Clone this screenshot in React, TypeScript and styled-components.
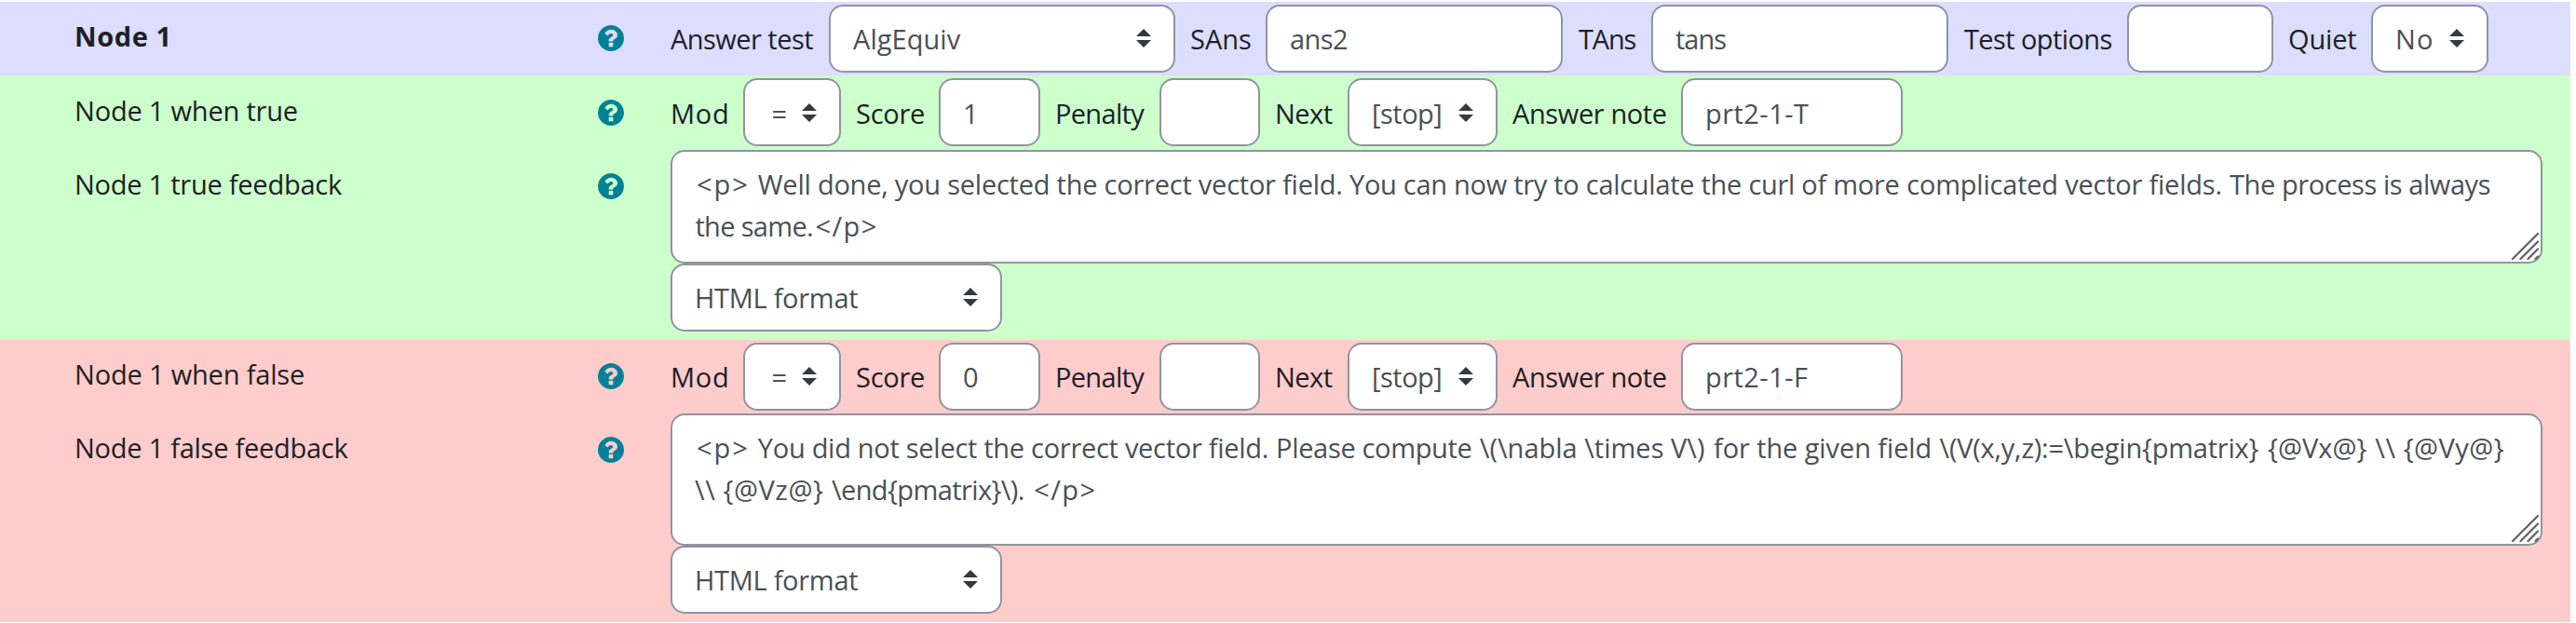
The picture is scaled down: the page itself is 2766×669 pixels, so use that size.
import React from "react";
import styled, { createGlobalStyle } from "styled-components";

const GlobalStyle = createGlobalStyle`
  *, *::before, *::after { box-sizing: border-box; }
  body {
    margin: 0;
    background: #fff;
    color: #1d2125;
    font-family: "Open Sans", "Noto Sans", sans-serif;
    font-size: 29px;
    line-height: 45px;
  }
`;

const Page = styled.main`
  width: 2760px;
  padding-top: 2px;
`;

const Section = styled.section<{ $bg: string }>`
  display: flow-root;
  background: ${(p) => p.$bg};
`;

const Row = styled.div<{ $height?: number }>`
  display: grid;
  grid-template-columns: 720px 1fr;
  height: ${(p) => (p.$height ? `${p.$height}px` : "auto")};
`;

const LabelCell = styled.div<{ $top?: number }>`
  display: flex;
  align-items: flex-start;
  justify-content: space-between;
  padding: ${(p) => p.$top ?? 14}px 50px 0 80px;
`;

const Text = styled.span<{ $track?: number; $bold?: boolean }>`
  white-space: pre;
  font-weight: ${(p) => (p.$bold ? 700 : 400)};
  letter-spacing: ${(p) => p.$track ?? 0}px;
`;

const HelpSvg = styled.svg`
  flex: none;
  width: 28px;
  height: 28px;
  margin-top: 10.7px;
  fill: #008196;
`;

const Controls = styled.div<{ $shift?: number }>`
  --shift: ${(p) => p.$shift ?? 0}px;
  display: flex;
  align-items: flex-start;
  padding-top: 3px;
`;

const Caption = styled.label<{ $width: number; $pad?: number; $track?: number }>`
  flex: none;
  width: ${(p) => p.$width}px;
  padding: calc(14px + var(--shift, 0px)) 0 0 ${(p) => p.$pad ?? 16}px;
  white-space: pre;
  letter-spacing: ${(p) => p.$track ?? 0}px;
`;

const Field = styled.div<{ $width: number }>`
  display: flex;
  flex: none;
  align-items: flex-start;
  justify-content: space-between;
  width: ${(p) => p.$width}px;
  height: 73px;
  padding: calc(12px + var(--shift, 0px)) 24px 0 24px;
  border: 2px solid #8f959e;
  border-radius: 15px;
  background: #fff;
  color: #495057;
`;

const ArrowsSvg = styled.svg`
  flex: none;
  width: 16px;
  height: 20px;
  margin-top: 12px;
  fill: #343a40;
`;

const Editor = styled.div`
  padding-bottom: 9px;
`;

const TextArea = styled.div<{ $height: number }>`
  position: relative;
  width: 2010px;
  height: ${(p) => p.$height}px;
  padding: 12px 22px;
  border: 2px solid #8f959e;
  border-radius: 15px;
  background: #fff;
  color: #495057;
`;

const Line = styled.div<{ $indent: number }>`
  display: flex;
  padding-left: ${(p) => p.$indent}px;
`;

const Phrase = styled.span<{ $width?: number; $track?: number }>`
  flex: none;
  width: ${(p) => (p.$width ? `${p.$width}px` : "auto")};
  white-space: pre;
  letter-spacing: ${(p) => p.$track ?? 0}px;
`;

const GripSvg = styled.svg`
  position: absolute;
  right: 0;
  bottom: 0;
  width: 32px;
  height: 32px;
  fill: none;
  stroke: #666;
  stroke-width: 2.4;
  stroke-linecap: round;
`;

function HelpIcon() {
  return (
    <HelpSvg viewBox="128 128 1536 1536" aria-label="Help">
      <path d="M1024 1376v-192q0-14-9-23t-23-9h-192q-14 0-23 9t-9 23v192q0 14 9 23t23 9h192q14 0 23-9t9-23zm256-672q0-88-55.5-163t-138.5-116-170-41q-243 0-371 213-15 24 8 42l132 100q7 6 19 6 16 0 25-12 53-68 86-92 34-24 86-24 48 0 85.5 26t37.5 59q0 38-20 61t-68 45q-63 28-115.5 86.5t-52.5 125.5v36q0 14 9 23t23 9h192q14 0 23-9t9-23q0-19 21.5-49.5t54.5-49.5q32-18 49-28.5t46-35 44.5-48 28-60.5 12.5-81zm384 192q0 209-103 385.5t-279.5 279.5-385.5 103-385.5-103-279.5-279.5-103-385.5 103-385.5 279.5-279.5 385.5-103 385.5 103 279.5 279.5 103 385.5z" />
    </HelpSvg>
  );
}

function Label(props: { text: string; track: number; bold?: boolean; top?: number }) {
  return (
    <LabelCell $top={props.top}>
      <Text $track={props.track} $bold={props.bold}>{props.text}</Text>
      <HelpIcon />
    </LabelCell>
  );
}

function Input({ width, value = "", track }: { width: number; value?: string; track?: number }) {
  return (
    <Field $width={width}>
      <Text $track={track}>{value}</Text>
    </Field>
  );
}

function Select({ width, value, track }: { width: number; value: string; track?: number }) {
  return (
    <Field $width={width}>
      <Text $track={track}>{value}</Text>
      <ArrowsSvg viewBox="0 0 4 5" preserveAspectRatio="none">
        <path d="M2 0L0 2h4zm0 5L0 3h4z" />
      </ArrowsSvg>
    </Field>
  );
}

function Grip() {
  return (
    <GripSvg viewBox="0 0 32 32">
      <path d="M2 29L29 2M10.5 29L29 10.5M18.5 29L29 18.5M26.5 29L29 26.5" />
    </GripSvg>
  );
}

function BranchControls({ score, note, shift }: { score: string; note: string; shift?: number }) {
  return (
    <Controls $shift={shift}>
      <Caption $width={78} $pad={0} $track={0.75}>Mod</Caption>
      <Select width={105} value=" =" track={-3} />
      <Caption $width={105} $track={-0.27}>Score</Caption>
      <Input width={109} value={score} />
      <Caption $width={128} $track={-0.68}>Penalty</Caption>
      <Input width={108} />
      <Caption $width={94} $track={-0.5}>Next</Caption>
      <Select width={161} value="[stop]" track={-0.5} />
      <Caption $width={197} $track={-0.385}>Answer note</Caption>
      <Input width={238} value={note} track={0.46} />
    </Controls>
  );
}

export default function App() {
  return (
    <>
      <GlobalStyle />
      <Page>
        <Section $bg="#ddddff">
          <Row $height={79}>
            <Label text="Node 1" track={0.6} bold />
            <Controls>
              <Caption $width={170} $pad={0} $track={-0.53}>Answer test</Caption>
              <Select width={372} value="AlgEquiv" track={0.05} />
              <Caption $width={97}>SAns</Caption>
              <Input width={319} value="ans2" track={-0.6} />
              <Caption $width={95} $pad={17} $track={-1.2}>TAns</Caption>
              <Input width={319} value="tans" track={-1} />
              <Caption $width={192} $pad={17} $track={-0.6}>Test options</Caption>
              <Input width={157} />
              <Caption $width={105} $track={-0.16}>Quiet</Caption>
              <Select width={126} value="No" track={1.2} />
            </Controls>
          </Row>
        </Section>

        <Section $bg="#ccffcc">
          <Row $height={80}>
            <Label text="Node 1 when true" track={-0.2} top={15} />
            <BranchControls score="1" note="prt2-1-T" shift={1} />
          </Row>
          <Row>
            <Label text="Node 1 true feedback" track={-0.245} />
            <Editor>
              <TextArea $height={122}>
                <Line $indent={4}>
                  <Phrase $width={65.8} $track={2}>{"<p> "}</Phrase>
                  <Phrase $width={635.2} $track={-0.231}>{"Well done, you selected the correct vector field. "}</Phrase>
                  <Phrase $width={598.3} $track={-0.28}>{"You can now try to calculate the curl of more "}</Phrase>
                  <Phrase $width={346.8} $track={-0.216}>{"complicated vector fields. "}</Phrase>
                  <Phrase $track={-0.43}>{"The process is always"}</Phrase>
                </Line>
                <Line $indent={2.4}>
                  <Phrase $width={129} $track={-0.67}>{"the same."}</Phrase>
                  <Phrase $track={1.47}>{"</p>"}</Phrase>
                </Line>
                <Grip />
              </TextArea>
              <Select width={356} value="HTML format" track={-0.29} />
            </Editor>
          </Row>
        </Section>

        <Section $bg="#ffcccc">
          <Row $height={79}>
            <Label text="Node 1 when false" track={-0.177} />
            <BranchControls score="0" note="prt2-1-F" />
          </Row>
          <Row>
            <Label text="Node 1 false feedback" track={-0.255} />
            <Editor>
              <TextArea $height={142}>
                <Line $indent={4}>
                  <Phrase $width={65.8} $track={2}>{"<p> "}</Phrase>
                  <Phrase $width={556.3} $track={-0.284}>{"You did not select the correct vector field. "}</Phrase>
                  <Phrase $width={218.7} $track={-0.34}>{"Please compute "}</Phrase>
                  <Phrase $width={251.2}>{"\\(\\nabla \\times V\\) "}</Phrase>
                  <Phrase $width={242.5} $track={-0.1}>{"for the given field "}</Phrase>
                  <Phrase $width={352.6} $track={-0.227}>{"\\(V(x,y,z):=\\begin{pmatrix} "}</Phrase>
                  <Phrase $width={115.3}>{"{@Vx@} "}</Phrase>
                  <Phrase $track={0.5}>{"\\\\ {@Vy@}"}</Phrase>
                </Line>
                <Line $indent={2}>
                  <Phrase $width={146.9} $track={0.56}>{"\\\\ {@Vz@} "}</Phrase>
                  <Phrase $width={217.3} $track={-0.59}>{"\\end{pmatrix}\\). "}</Phrase>
                  <Phrase $track={1.47}>{"</p>"}</Phrase>
                </Line>
                <Grip />
              </TextArea>
              <Select width={356} value="HTML format" track={-0.29} />
            </Editor>
          </Row>
        </Section>
      </Page>
    </>
  );
}
